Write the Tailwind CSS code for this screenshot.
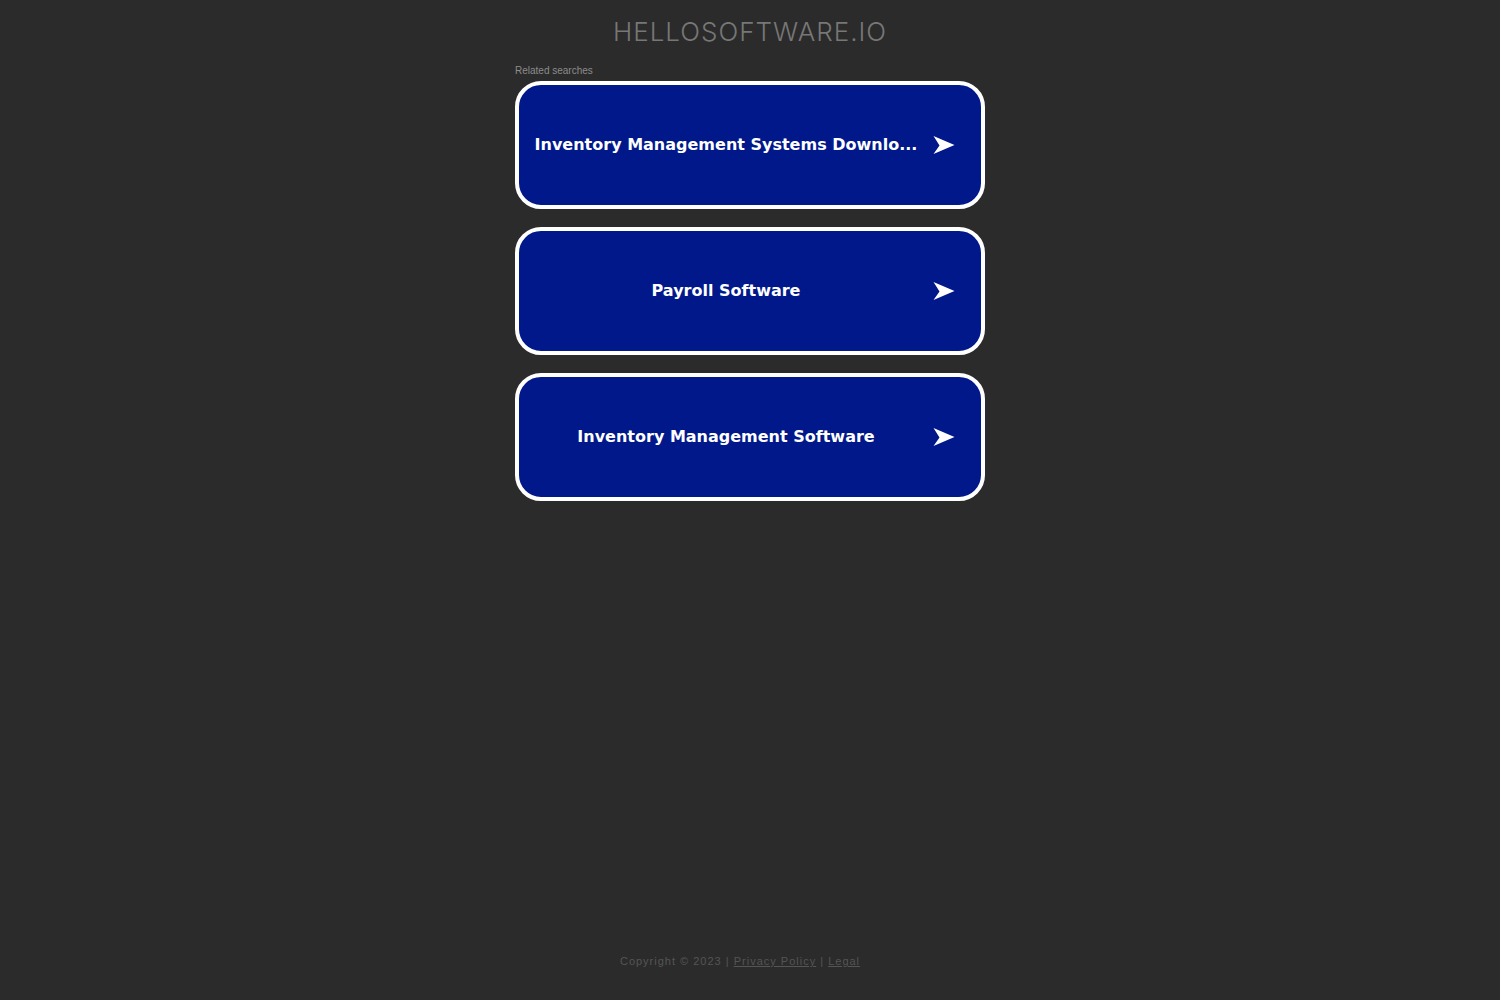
<!DOCTYPE html>
<html lang="en">
<head>
<meta charset="utf-8">
<meta name="viewport" content="width=device-width, initial-scale=1">
<title>hellosoftware.io</title>
<script src="https://cdn.jsdelivr.net/npm/@tailwindcss/browser@4"></script>
</head>
<body class="flex min-h-screen flex-col bg-[#2b2b2b] font-['Liberation_Sans',Arial,sans-serif]">
<header class="pt-4 text-center">
  <h1 class="font-['Inter',sans-serif] text-[26px] leading-8 font-light tracking-[1px] text-[#777777] uppercase">hellosoftware.io</h1>
</header>
<main class="mx-auto w-full max-w-[470px] flex-1 pt-4">
  <h2 class="pb-[3px] text-[10px] leading-[14px] text-[#8c8c8c]">Related searches</h2>
  <nav class="flex flex-col gap-[18px] font-['DejaVu_Sans',Verdana,sans-serif] text-base leading-6 font-bold text-white">
    <a href="#" class="flex h-32 items-center gap-[15px] rounded-[26px] border-4 border-white bg-[#00188a] pr-[26px] pl-[15px]">
      <span class="min-w-0 flex-1 text-center whitespace-nowrap">Inventory Management Systems Downlo...</span>
      <svg class="h-[18px] w-[22px] shrink-0" viewBox="0 0 22 18" fill="currentColor" aria-hidden="true"><path d="M.5 0 21.500 9 .5 18 6.500 9.500Z"/></svg>
    </a>
    <a href="#" class="flex h-32 items-center gap-[15px] rounded-[26px] border-4 border-white bg-[#00188a] pr-[26px] pl-[15px]">
      <span class="min-w-0 flex-1 text-center whitespace-nowrap">Payroll Software</span>
      <svg class="h-[18px] w-[22px] shrink-0" viewBox="0 0 22 18" fill="currentColor" aria-hidden="true"><path d="M.5 0 21.500 9 .5 18 6.500 9.500Z"/></svg>
    </a>
    <a href="#" class="flex h-32 items-center gap-[15px] rounded-[26px] border-4 border-white bg-[#00188a] pr-[26px] pl-[15px]">
      <span class="min-w-0 flex-1 text-center whitespace-nowrap">Inventory Management Software</span>
      <svg class="h-[18px] w-[22px] shrink-0" viewBox="0 0 22 18" fill="currentColor" aria-hidden="true"><path d="M.5 0 21.500 9 .5 18 6.500 9.500Z"/></svg>
    </a>
  </nav>
</main>
<footer class="pr-5 pb-[31px] text-center text-[11px] leading-4 tracking-[1px] text-[#555555]">
  Copyright © 2023 | <a href="#" class="underline">Privacy Policy</a> | <a href="#" class="underline">Legal</a>
</footer>
</body>
</html>
